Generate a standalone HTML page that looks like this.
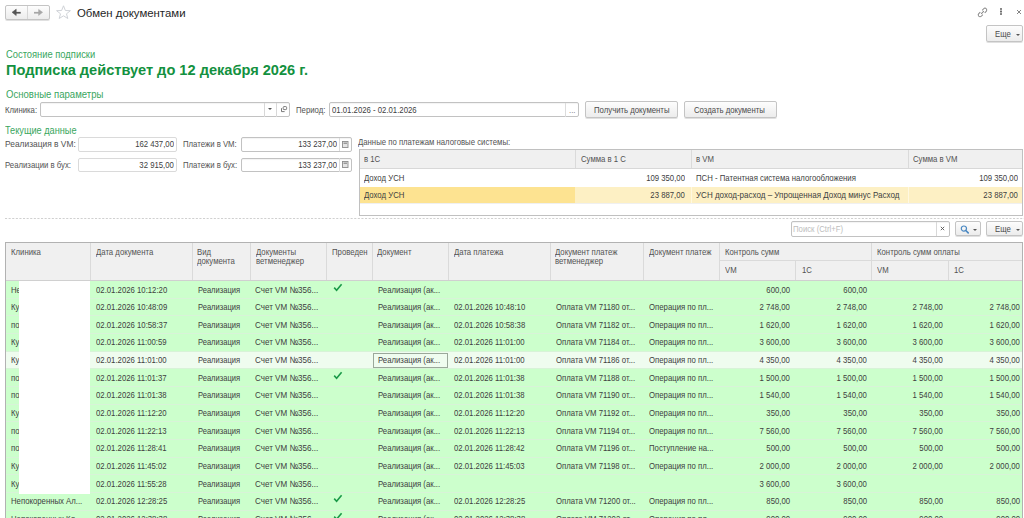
<!DOCTYPE html>
<html><head><meta charset="utf-8"><style>
html,body{margin:0;padding:0;}
body{width:1024px;height:518px;overflow:hidden;position:relative;background:#fff;font-family:"Liberation Sans",sans-serif;color:#525252;}
.t{position:absolute;line-height:1;white-space:nowrap;}
.r{position:absolute;}
.btn{border:1px solid #c4c4c4;border-radius:2px;box-sizing:border-box;background:linear-gradient(#fdfdfd,#ececec);box-shadow:0 1px 0 rgba(0,0,0,0.12);}
.inp{border:1px solid #c2c2c2;border-radius:2px;box-sizing:border-box;background:#fff;box-shadow:inset 0 1px 1px rgba(0,0,0,0.05);}
.ro{border-color:#dadada;box-shadow:none;}
.tri{position:absolute;width:0;height:0;border-left:2px solid transparent;border-right:2px solid transparent;border-top:2px solid #555;}
</style></head><body>
<div class="r btn" style="left:5.00px;top:5.00px;width:45.00px;height:14.50px;"></div>
<div class="r " style="left:27.00px;top:5.50px;width:1.00px;height:13.50px;background:#d6d6d6;"></div>
<svg class="r" style="left:10px;top:8px" width="36" height="10" viewBox="0 0 36 10">
<path d="M5.5 3.9 H10.7 V5.6 H5.5 Z" fill="#555"/><path d="M2.1 4.3 L6.2 1.2 V7.5 Z" fill="#555" stroke="#555" stroke-width="0.6" stroke-linejoin="round"/>
<path d="M24 3.9 H29.2 V5.6 H24 Z" fill="#a6a6a6"/><path d="M32.6 4.3 L28.6 1.4 V7.4 Z" fill="#a6a6a6" stroke="#a6a6a6" stroke-width="0.5" stroke-linejoin="round"/>
</svg>
<svg class="r" style="left:56px;top:5px" width="16" height="15" viewBox="0 0 16 15">
<path d="M7.5 0.8 L9.4 5.5 L14.4 5.7 L10.5 8.8 L11.8 13.5 L7.5 10.8 L3.2 13.5 L4.5 8.8 L0.6 5.7 L5.6 5.5 Z" fill="none" stroke="#c9cdd2" stroke-width="0.9" stroke-linejoin="miter"/>
</svg>
<div class="t " style="top:7.85px;font-size:11.4px;left:77.00px;transform-origin:0 0;color:#1f1f1f;">Обмен документами</div>
<svg class="r" style="left:975.6px;top:5.6px" width="13" height="13" viewBox="0 0 13 13">
<g transform="rotate(-45 6.5 6.5)" fill="none" stroke="#858585" stroke-width="0.95">
<path d="M5.2 4.7 H3 A1.8 1.8 0 0 0 3 8.3 H5.2"/><path d="M7.8 4.7 H10 A1.8 1.8 0 0 1 10 8.3 H7.8"/><path d="M4.6 6.5 H8.4"/>
</g></svg>
<svg class="r" style="left:998px;top:7px" width="6" height="9" viewBox="0 0 6 9">
<path d="M3 1.3 V7.8" stroke="#9a9a9a" stroke-width="0.8"/>
<rect x="2.2" y="1.2" width="1.6" height="1.5" fill="#555"/><rect x="2.2" y="3.8" width="1.6" height="1.5" fill="#555"/><rect x="2.2" y="6.3" width="1.6" height="1.5" fill="#555"/>
</svg>
<svg class="r" style="left:1016px;top:9px" width="6" height="6" viewBox="0 0 6 6">
<path d="M1 1 L5 5 M5 1 L1 5" stroke="#777" stroke-width="0.9"/></svg>
<div class="r btn" style="left:986.40px;top:25.20px;width:36.50px;height:16.50px;"></div>
<div class="t " style="top:29.81px;font-size:9.2px;left:994.80px;transform-origin:0 0;transform:scaleX(0.845);color:#4a4a4a;">Еще</div>
<div class="tri" style="left:1015.6px;top:33.6px"></div>
<div class="t " style="top:49.88px;font-size:10.3px;left:5.60px;transform-origin:0 0;transform:scaleX(0.909);color:#3aa65e;">Состояние подписки</div>
<div class="t " style="top:63.44px;font-size:14.6px;left:6.00px;transform-origin:0 0;color:#139140;font-weight:bold;">Подписка действует до 12 декабря 2026 г.</div>
<div class="t " style="top:90.08px;font-size:10.3px;left:5.60px;transform-origin:0 0;transform:scaleX(0.929);color:#3aa65e;">Основные параметры</div>
<div class="t " style="top:105.91px;font-size:9.2px;left:5.00px;transform-origin:0 0;transform:scaleX(0.845);">Клиника:</div>
<div class="r inp" style="left:40.40px;top:102.20px;width:249.60px;height:15.00px;"></div>
<div class="r " style="left:263.80px;top:102.60px;width:1.00px;height:14.20px;background:#d8d8d8;"></div>
<div class="r " style="left:275.90px;top:102.60px;width:1.00px;height:14.20px;background:#d8d8d8;"></div>
<div class="tri" style="left:268.3px;top:108.2px"></div>
<svg class="r" style="left:280px;top:105px" width="8" height="8" viewBox="0 0 8 8">
<rect x="3.2" y="1.6" width="3.4" height="3" rx="0.8" fill="none" stroke="#6a6a6a" stroke-width="0.9"/>
<path d="M1.5 3.2 V6.6 H4.6" fill="none" stroke="#6a6a6a" stroke-width="0.9"/></svg>
<div class="t " style="top:105.91px;font-size:9.2px;left:296.40px;transform-origin:0 0;transform:scaleX(0.845);">Период:</div>
<div class="r inp" style="left:329.30px;top:102.10px;width:250.00px;height:15.00px;"></div>
<div class="r " style="left:565.40px;top:102.50px;width:1.00px;height:14.20px;background:#dcdcdc;"></div>
<div class="t " style="top:105.91px;font-size:9.2px;left:332.00px;transform-origin:0 0;transform:scaleX(0.845);color:#404040;">01.01.2026 - 02.01.2026</div>
<div class="t " style="top:105.71px;font-size:9.2px;left:568.50px;transform-origin:0 0;transform:scaleX(0.845);color:#888;">...</div>
<div class="r btn" style="left:585.20px;top:101.30px;width:92.70px;height:16.30px;"></div>
<div class="t " style="top:106.01px;font-size:9.2px;left:593.70px;transform-origin:0 0;transform:scaleX(0.845);color:#4a4a4a;">Получить документы</div>
<div class="r btn" style="left:684.20px;top:101.30px;width:92.60px;height:16.30px;"></div>
<div class="t " style="top:106.01px;font-size:9.2px;left:694.30px;transform-origin:0 0;transform:scaleX(0.845);color:#4a4a4a;">Создать документы</div>
<div class="t " style="top:125.94px;font-size:10px;left:4.90px;transform-origin:0 0;transform:scaleX(0.918);color:#3aa65e;">Текущие данные</div>
<div class="t " style="top:140.41px;font-size:9.2px;left:4.90px;transform-origin:0 0;transform:scaleX(0.913);">Реализация в VM:</div>
<div class="r inp ro" style="left:78.40px;top:137.30px;width:98.30px;height:14.40px;"></div>
<div class="t " style="top:140.41px;font-size:9.2px;right:850.00px;transform-origin:100% 0;transform:scaleX(0.845);color:#404040;">162 437,00</div>
<div class="t " style="top:161.01px;font-size:9.2px;left:4.90px;transform-origin:0 0;transform:scaleX(0.845);">Реализации в бух:</div>
<div class="r inp ro" style="left:78.40px;top:157.50px;width:98.30px;height:14.90px;"></div>
<div class="t " style="top:161.01px;font-size:9.2px;right:850.00px;transform-origin:100% 0;transform:scaleX(0.845);color:#404040;">32 915,00</div>
<div class="t " style="top:140.41px;font-size:9.2px;left:182.80px;transform-origin:0 0;transform:scaleX(0.845);">Платежи в VM:</div>
<div class="t " style="top:161.01px;font-size:9.2px;left:182.80px;transform-origin:0 0;transform:scaleX(0.845);">Платежи в бух:</div>
<div class="r inp" style="left:241.30px;top:137.40px;width:110.70px;height:14.20px;"></div>
<div class="r " style="left:338.80px;top:137.80px;width:1.00px;height:13.40px;background:#dcdcdc;"></div>
<div class="t " style="top:140.41px;font-size:9.2px;right:687.30px;transform-origin:100% 0;transform:scaleX(0.845);color:#404040;">133 237,00</div>
<svg class="r" style="left:342px;top:140.80px" width="7" height="7" viewBox="0 0 7 7"><rect x="0.5" y="0.5" width="5.5" height="6" fill="#e4e4e4" stroke="#8c8c8c" stroke-width="0.9"/><rect x="1.5" y="1.5" width="3.5" height="1.5" fill="#9a9a9a"/></svg>
<div class="r inp" style="left:241.30px;top:157.70px;width:110.70px;height:14.80px;"></div>
<div class="r " style="left:338.80px;top:158.10px;width:1.00px;height:14.00px;background:#dcdcdc;"></div>
<div class="t " style="top:161.01px;font-size:9.2px;right:687.30px;transform-origin:100% 0;transform:scaleX(0.845);color:#404040;">133 237,00</div>
<svg class="r" style="left:342px;top:161.10px" width="7" height="7" viewBox="0 0 7 7"><rect x="0.5" y="0.5" width="5.5" height="6" fill="#e4e4e4" stroke="#8c8c8c" stroke-width="0.9"/><rect x="1.5" y="1.5" width="3.5" height="1.5" fill="#9a9a9a"/></svg>
<div class="t " style="top:138.21px;font-size:9.2px;left:358.10px;transform-origin:0 0;transform:scaleX(0.845);">Данные по платежам налоговые системы:</div>
<div class="r " style="left:358.50px;top:149.30px;width:664.50px;height:66.70px;border:1px solid #c0c0c0;background:#fff;box-sizing:border-box;"></div>
<div class="r " style="left:359.50px;top:150.30px;width:662.50px;height:18.40px;background:#f0f0f0;border-bottom:1px solid #d8d8d8;box-sizing:border-box;"></div>
<div class="r " style="left:575.30px;top:150.30px;width:1.00px;height:17.80px;background:#dadada;"></div>
<div class="r " style="left:690.50px;top:150.30px;width:1.00px;height:17.80px;background:#dadada;"></div>
<div class="r " style="left:907.50px;top:150.30px;width:1.00px;height:17.80px;background:#dadada;"></div>
<div class="t " style="top:154.71px;font-size:9.2px;left:363.90px;transform-origin:0 0;transform:scaleX(0.845);">в 1С</div>
<div class="t " style="top:154.71px;font-size:9.2px;left:580.60px;transform-origin:0 0;transform:scaleX(0.845);">Сумма в 1 С</div>
<div class="t " style="top:154.71px;font-size:9.2px;left:695.90px;transform-origin:0 0;transform:scaleX(0.845);">в VM</div>
<div class="t " style="top:154.71px;font-size:9.2px;left:912.50px;transform-origin:0 0;transform:scaleX(0.845);">Сумма в VM</div>
<div class="t " style="top:173.81px;font-size:9.2px;left:363.90px;transform-origin:0 0;transform:scaleX(0.845);color:#404040;">Доход УСН</div>
<div class="t " style="top:173.81px;font-size:9.2px;right:339.00px;transform-origin:100% 0;transform:scaleX(0.845);color:#404040;">109 350,00</div>
<div class="t " style="top:173.81px;font-size:9.2px;left:695.90px;transform-origin:0 0;transform:scaleX(0.845);color:#404040;">ПСН - Патентная система налогообложения</div>
<div class="t " style="top:173.81px;font-size:9.2px;right:6.40px;transform-origin:100% 0;transform:scaleX(0.845);color:#404040;">109 350,00</div>
<div class="r " style="left:359.50px;top:186.90px;width:215.80px;height:15.90px;background:#fde391;"></div>
<div class="r " style="left:575.30px;top:186.90px;width:446.70px;height:15.90px;background:#fdf0c4;"></div>
<div class="r " style="left:690.50px;top:186.90px;width:1.00px;height:15.90px;background:#fff8e0;"></div>
<div class="r " style="left:907.50px;top:186.90px;width:1.00px;height:15.90px;background:#fff8e0;"></div>
<div class="r " style="left:359.50px;top:202.80px;width:662.50px;height:1.00px;background:#f0f0f0;"></div>
<div class="t " style="top:191.21px;font-size:9.2px;left:363.90px;transform-origin:0 0;transform:scaleX(0.845);color:#404040;">Доход УСН</div>
<div class="t " style="top:191.21px;font-size:9.2px;right:339.00px;transform-origin:100% 0;transform:scaleX(0.845);color:#404040;">23 887,00</div>
<div class="t " style="top:191.21px;font-size:9.2px;left:695.90px;transform-origin:0 0;transform:scaleX(0.874);color:#404040;">УСН доход-расход – Упрощенная Доход минус Расход</div>
<div class="t " style="top:191.21px;font-size:9.2px;right:6.40px;transform-origin:100% 0;transform:scaleX(0.845);color:#404040;">23 887,00</div>
<svg class="r" style="left:4.7px;top:218px" width="1020" height="1" viewBox="0 0 1020 1"><path d="M0 0.5 H1020" stroke="#d0d0d0" stroke-width="1" stroke-dasharray="2.1 1.5"/></svg>
<div class="r inp" style="left:791.20px;top:221.30px;width:159.10px;height:15.30px;"></div>
<div class="r " style="left:935.90px;top:222.00px;width:1.00px;height:13.90px;background:#d8d8d8;"></div>
<div class="t " style="top:225.41px;font-size:9.2px;left:793.20px;transform-origin:0 0;transform:scaleX(0.845);color:#bdbdbd;">Поиск (Ctrl+F)</div>
<svg class="r" style="left:940px;top:226px" width="5" height="5" viewBox="0 0 5 5">
<path d="M0.8 0.8 L4.2 4.2 M4.2 0.8 L0.8 4.2" stroke="#555" stroke-width="0.9"/></svg>
<div class="r btn" style="left:955.20px;top:221.30px;width:25.60px;height:15.00px;"></div>
<svg class="r" style="left:959.5px;top:224.8px" width="10" height="9" viewBox="0 0 10 9">
<circle cx="3.9" cy="3.6" r="2.6" fill="none" stroke="#4a88c2" stroke-width="1.2"/>
<path d="M5.8 5.5 L8.2 7.9" stroke="#4a88c2" stroke-width="1.6" stroke-linecap="round"/></svg>
<div class="tri" style="left:973px;top:228.8px"></div>
<div class="r btn" style="left:986.20px;top:221.30px;width:36.60px;height:15.00px;"></div>
<div class="t " style="top:225.41px;font-size:9.2px;left:995.00px;transform-origin:0 0;transform:scaleX(0.845);color:#4a4a4a;">Еще</div>
<div class="tri" style="left:1015.6px;top:228.8px"></div>
<div class="r " style="left:4.90px;top:242.00px;width:1018.30px;height:288.00px;border:1px solid #b2b2b2;border-bottom:none;box-sizing:border-box;background:#fff;"></div>
<div class="r " style="left:5.90px;top:243.00px;width:1016.30px;height:37.00px;background:#f0f0f0;"></div>
<div class="r " style="left:5.90px;top:279.50px;width:1016.30px;height:1.00px;background:#d0d0d0;"></div>
<div class="r " style="left:89.80px;top:243.00px;width:1.00px;height:37.00px;background:#dadada;"></div>
<div class="r " style="left:192.00px;top:243.00px;width:1.00px;height:37.00px;background:#dadada;"></div>
<div class="r " style="left:249.90px;top:243.00px;width:1.00px;height:37.00px;background:#dadada;"></div>
<div class="r " style="left:326.00px;top:243.00px;width:1.00px;height:37.00px;background:#dadada;"></div>
<div class="r " style="left:371.80px;top:243.00px;width:1.00px;height:37.00px;background:#dadada;"></div>
<div class="r " style="left:448.10px;top:243.00px;width:1.00px;height:37.00px;background:#dadada;"></div>
<div class="r " style="left:550.00px;top:243.00px;width:1.00px;height:37.00px;background:#dadada;"></div>
<div class="r " style="left:643.10px;top:243.00px;width:1.00px;height:37.00px;background:#dadada;"></div>
<div class="r " style="left:719.00px;top:243.00px;width:1.00px;height:37.00px;background:#dadada;"></div>
<div class="r " style="left:871.10px;top:243.00px;width:1.00px;height:37.00px;background:#dadada;"></div>
<div class="r " style="left:795.10px;top:261.00px;width:1.00px;height:19.00px;background:#dadada;"></div>
<div class="r " style="left:948.00px;top:261.00px;width:1.00px;height:19.00px;background:#dadada;"></div>
<div class="r " style="left:719.50px;top:260.30px;width:302.70px;height:1.00px;background:#dadada;"></div>
<div class="t " style="top:247.81px;font-size:9.2px;left:10.50px;transform-origin:0 0;transform:scaleX(0.845);">Клиника</div>
<div class="t " style="top:247.81px;font-size:9.2px;left:95.60px;transform-origin:0 0;transform:scaleX(0.845);">Дата документа</div>
<div class="t " style="top:247.81px;font-size:9.2px;left:197.40px;transform-origin:0 0;transform:scaleX(0.845);">Вид</div>
<div class="t " style="top:257.11px;font-size:9.2px;left:197.40px;transform-origin:0 0;transform:scaleX(0.845);">документа</div>
<div class="t " style="top:247.81px;font-size:9.2px;left:255.50px;transform-origin:0 0;transform:scaleX(0.845);">Документы</div>
<div class="t " style="top:257.11px;font-size:9.2px;left:255.50px;transform-origin:0 0;transform:scaleX(0.845);">ветменеджер</div>
<div class="t " style="top:247.81px;font-size:9.2px;left:331.70px;transform-origin:0 0;transform:scaleX(0.845);">Проведен</div>
<div class="t " style="top:247.81px;font-size:9.2px;left:377.30px;transform-origin:0 0;transform:scaleX(0.845);">Документ</div>
<div class="t " style="top:247.81px;font-size:9.2px;left:454.00px;transform-origin:0 0;transform:scaleX(0.845);">Дата платежа</div>
<div class="t " style="top:247.81px;font-size:9.2px;left:555.10px;transform-origin:0 0;transform:scaleX(0.845);">Документ платеж</div>
<div class="t " style="top:257.11px;font-size:9.2px;left:555.10px;transform-origin:0 0;transform:scaleX(0.845);">ветменеджер</div>
<div class="t " style="top:247.81px;font-size:9.2px;left:648.60px;transform-origin:0 0;transform:scaleX(0.845);">Документ платеж</div>
<div class="t " style="top:247.81px;font-size:9.2px;left:725.00px;transform-origin:0 0;transform:scaleX(0.845);">Контроль сумм</div>
<div class="t " style="top:247.81px;font-size:9.2px;left:877.30px;transform-origin:0 0;transform:scaleX(0.845);">Контроль сумм оплаты</div>
<div class="t " style="top:266.31px;font-size:9.2px;left:725.00px;transform-origin:0 0;transform:scaleX(0.845);">VM</div>
<div class="t " style="top:266.31px;font-size:9.2px;left:801.70px;transform-origin:0 0;transform:scaleX(0.845);">1С</div>
<div class="t " style="top:266.31px;font-size:9.2px;left:877.30px;transform-origin:0 0;transform:scaleX(0.845);">VM</div>
<div class="t " style="top:266.31px;font-size:9.2px;left:954.20px;transform-origin:0 0;transform:scaleX(0.845);">1С</div>
<div class="r " style="left:5.90px;top:280.50px;width:1016.30px;height:17.66px;background:#ccffcc;"></div>
<div class="t " style="top:285.51px;font-size:9.2px;left:10.50px;transform-origin:0 0;transform:scaleX(0.845);color:#404040;">Не</div>
<div class="t " style="top:285.51px;font-size:9.2px;left:95.60px;transform-origin:0 0;transform:scaleX(0.845);color:#404040;">02.01.2026 10:12:20</div>
<div class="t " style="top:285.51px;font-size:9.2px;left:197.80px;transform-origin:0 0;transform:scaleX(0.823);color:#404040;">Реализация</div>
<div class="t " style="top:285.51px;font-size:9.2px;left:255.20px;transform-origin:0 0;transform:scaleX(0.877);color:#404040;">Счет VM №356...</div>
<svg class="r" style="left:333px;top:282.50px" width="10" height="9" viewBox="0 0 10 9"><path d="M1.2 4.6 L3.6 7.2 L8.6 1.2" fill="none" stroke="#1a9a48" stroke-width="1.6"/></svg>
<div class="t " style="top:285.51px;font-size:9.2px;left:378.00px;transform-origin:0 0;transform:scaleX(0.845);color:#404040;">Реализация (ак...</div>
<div class="t " style="top:285.51px;font-size:9.2px;left:454.00px;transform-origin:0 0;transform:scaleX(0.845);color:#404040;"></div>
<div class="t " style="top:285.51px;font-size:9.2px;left:555.70px;transform-origin:0 0;transform:scaleX(0.845);color:#404040;"></div>
<div class="t " style="top:285.51px;font-size:9.2px;left:648.60px;transform-origin:0 0;transform:scaleX(0.845);color:#404040;"></div>
<div class="t " style="top:285.51px;font-size:9.2px;right:233.80px;transform-origin:100% 0;transform:scaleX(0.845);color:#404040;">600,00</div>
<div class="t " style="top:285.51px;font-size:9.2px;right:157.20px;transform-origin:100% 0;transform:scaleX(0.845);color:#404040;">600,00</div>
<div class="r " style="left:5.90px;top:298.16px;width:1016.30px;height:17.66px;background:#ccffcc;"></div>
<div class="t " style="top:303.17px;font-size:9.2px;left:10.50px;transform-origin:0 0;transform:scaleX(0.845);color:#404040;">Ку</div>
<div class="t " style="top:303.17px;font-size:9.2px;left:95.60px;transform-origin:0 0;transform:scaleX(0.845);color:#404040;">02.01.2026 10:48:09</div>
<div class="t " style="top:303.17px;font-size:9.2px;left:197.80px;transform-origin:0 0;transform:scaleX(0.823);color:#404040;">Реализация</div>
<div class="t " style="top:303.17px;font-size:9.2px;left:255.20px;transform-origin:0 0;transform:scaleX(0.877);color:#404040;">Счет VM №356...</div>
<div class="t " style="top:303.17px;font-size:9.2px;left:378.00px;transform-origin:0 0;transform:scaleX(0.845);color:#404040;">Реализация (ак...</div>
<div class="t " style="top:303.17px;font-size:9.2px;left:454.00px;transform-origin:0 0;transform:scaleX(0.845);color:#404040;">02.01.2026 10:48:10</div>
<div class="t " style="top:303.17px;font-size:9.2px;left:555.70px;transform-origin:0 0;transform:scaleX(0.845);color:#404040;">Оплата VM 71180 от...</div>
<div class="t " style="top:303.17px;font-size:9.2px;left:648.60px;transform-origin:0 0;transform:scaleX(0.845);color:#404040;">Операция по пл...</div>
<div class="t " style="top:303.17px;font-size:9.2px;right:233.80px;transform-origin:100% 0;transform:scaleX(0.845);color:#404040;">2 748,00</div>
<div class="t " style="top:303.17px;font-size:9.2px;right:157.20px;transform-origin:100% 0;transform:scaleX(0.845);color:#404040;">2 748,00</div>
<div class="t " style="top:303.17px;font-size:9.2px;right:81.00px;transform-origin:100% 0;transform:scaleX(0.845);color:#404040;">2 748,00</div>
<div class="t " style="top:303.17px;font-size:9.2px;right:4.40px;transform-origin:100% 0;transform:scaleX(0.845);color:#404040;">2 748,00</div>
<div class="r " style="left:5.90px;top:315.82px;width:1016.30px;height:17.66px;background:#ccffcc;"></div>
<div class="t " style="top:320.83px;font-size:9.2px;left:10.50px;transform-origin:0 0;transform:scaleX(0.845);color:#404040;">по</div>
<div class="t " style="top:320.83px;font-size:9.2px;left:95.60px;transform-origin:0 0;transform:scaleX(0.845);color:#404040;">02.01.2026 10:58:37</div>
<div class="t " style="top:320.83px;font-size:9.2px;left:197.80px;transform-origin:0 0;transform:scaleX(0.823);color:#404040;">Реализация</div>
<div class="t " style="top:320.83px;font-size:9.2px;left:255.20px;transform-origin:0 0;transform:scaleX(0.877);color:#404040;">Счет VM №356...</div>
<div class="t " style="top:320.83px;font-size:9.2px;left:378.00px;transform-origin:0 0;transform:scaleX(0.845);color:#404040;">Реализация (ак...</div>
<div class="t " style="top:320.83px;font-size:9.2px;left:454.00px;transform-origin:0 0;transform:scaleX(0.845);color:#404040;">02.01.2026 10:58:38</div>
<div class="t " style="top:320.83px;font-size:9.2px;left:555.70px;transform-origin:0 0;transform:scaleX(0.845);color:#404040;">Оплата VM 71182 от...</div>
<div class="t " style="top:320.83px;font-size:9.2px;left:648.60px;transform-origin:0 0;transform:scaleX(0.845);color:#404040;">Операция по пл...</div>
<div class="t " style="top:320.83px;font-size:9.2px;right:233.80px;transform-origin:100% 0;transform:scaleX(0.845);color:#404040;">1 620,00</div>
<div class="t " style="top:320.83px;font-size:9.2px;right:157.20px;transform-origin:100% 0;transform:scaleX(0.845);color:#404040;">1 620,00</div>
<div class="t " style="top:320.83px;font-size:9.2px;right:81.00px;transform-origin:100% 0;transform:scaleX(0.845);color:#404040;">1 620,00</div>
<div class="t " style="top:320.83px;font-size:9.2px;right:4.40px;transform-origin:100% 0;transform:scaleX(0.845);color:#404040;">1 620,00</div>
<div class="r " style="left:5.90px;top:333.48px;width:1016.30px;height:17.66px;background:#ccffcc;"></div>
<div class="t " style="top:338.49px;font-size:9.2px;left:10.50px;transform-origin:0 0;transform:scaleX(0.845);color:#404040;">Ку</div>
<div class="t " style="top:338.49px;font-size:9.2px;left:95.60px;transform-origin:0 0;transform:scaleX(0.845);color:#404040;">02.01.2026 11:00:59</div>
<div class="t " style="top:338.49px;font-size:9.2px;left:197.80px;transform-origin:0 0;transform:scaleX(0.823);color:#404040;">Реализация</div>
<div class="t " style="top:338.49px;font-size:9.2px;left:255.20px;transform-origin:0 0;transform:scaleX(0.877);color:#404040;">Счет VM №356...</div>
<div class="t " style="top:338.49px;font-size:9.2px;left:378.00px;transform-origin:0 0;transform:scaleX(0.845);color:#404040;">Реализация (ак...</div>
<div class="t " style="top:338.49px;font-size:9.2px;left:454.00px;transform-origin:0 0;transform:scaleX(0.845);color:#404040;">02.01.2026 11:01:00</div>
<div class="t " style="top:338.49px;font-size:9.2px;left:555.70px;transform-origin:0 0;transform:scaleX(0.845);color:#404040;">Оплата VM 71184 от...</div>
<div class="t " style="top:338.49px;font-size:9.2px;left:648.60px;transform-origin:0 0;transform:scaleX(0.845);color:#404040;">Операция по пл...</div>
<div class="t " style="top:338.49px;font-size:9.2px;right:233.80px;transform-origin:100% 0;transform:scaleX(0.845);color:#404040;">3 600,00</div>
<div class="t " style="top:338.49px;font-size:9.2px;right:157.20px;transform-origin:100% 0;transform:scaleX(0.845);color:#404040;">3 600,00</div>
<div class="t " style="top:338.49px;font-size:9.2px;right:81.00px;transform-origin:100% 0;transform:scaleX(0.845);color:#404040;">3 600,00</div>
<div class="t " style="top:338.49px;font-size:9.2px;right:4.40px;transform-origin:100% 0;transform:scaleX(0.845);color:#404040;">3 600,00</div>
<div class="r " style="left:5.90px;top:351.14px;width:1016.30px;height:17.66px;background:#effcef;"></div>
<div class="t " style="top:356.15px;font-size:9.2px;left:10.50px;transform-origin:0 0;transform:scaleX(0.845);color:#404040;">Ку</div>
<div class="t " style="top:356.15px;font-size:9.2px;left:95.60px;transform-origin:0 0;transform:scaleX(0.845);color:#404040;">02.01.2026 11:01:00</div>
<div class="t " style="top:356.15px;font-size:9.2px;left:197.80px;transform-origin:0 0;transform:scaleX(0.823);color:#404040;">Реализация</div>
<div class="t " style="top:356.15px;font-size:9.2px;left:255.20px;transform-origin:0 0;transform:scaleX(0.877);color:#404040;">Счет VM №356...</div>
<div class="t " style="top:356.15px;font-size:9.2px;left:378.00px;transform-origin:0 0;transform:scaleX(0.845);color:#404040;">Реализация (ак...</div>
<div class="t " style="top:356.15px;font-size:9.2px;left:454.00px;transform-origin:0 0;transform:scaleX(0.845);color:#404040;">02.01.2026 11:01:00</div>
<div class="t " style="top:356.15px;font-size:9.2px;left:555.70px;transform-origin:0 0;transform:scaleX(0.845);color:#404040;">Оплата VM 71186 от...</div>
<div class="t " style="top:356.15px;font-size:9.2px;left:648.60px;transform-origin:0 0;transform:scaleX(0.845);color:#404040;">Операция по пл...</div>
<div class="t " style="top:356.15px;font-size:9.2px;right:233.80px;transform-origin:100% 0;transform:scaleX(0.845);color:#404040;">4 350,00</div>
<div class="t " style="top:356.15px;font-size:9.2px;right:157.20px;transform-origin:100% 0;transform:scaleX(0.845);color:#404040;">4 350,00</div>
<div class="t " style="top:356.15px;font-size:9.2px;right:81.00px;transform-origin:100% 0;transform:scaleX(0.845);color:#404040;">4 350,00</div>
<div class="t " style="top:356.15px;font-size:9.2px;right:4.40px;transform-origin:100% 0;transform:scaleX(0.845);color:#404040;">4 350,00</div>
<div class="r " style="left:373.20px;top:352.64px;width:74.70px;height:15.16px;border:1px solid #9aa89a;box-sizing:border-box;"></div>
<div class="r " style="left:5.90px;top:368.80px;width:1016.30px;height:17.66px;background:#ccffcc;"></div>
<div class="t " style="top:373.81px;font-size:9.2px;left:10.50px;transform-origin:0 0;transform:scaleX(0.845);color:#404040;">по</div>
<div class="t " style="top:373.81px;font-size:9.2px;left:95.60px;transform-origin:0 0;transform:scaleX(0.845);color:#404040;">02.01.2026 11:01:37</div>
<div class="t " style="top:373.81px;font-size:9.2px;left:197.80px;transform-origin:0 0;transform:scaleX(0.823);color:#404040;">Реализация</div>
<div class="t " style="top:373.81px;font-size:9.2px;left:255.20px;transform-origin:0 0;transform:scaleX(0.877);color:#404040;">Счет VM №356...</div>
<svg class="r" style="left:333px;top:370.80px" width="10" height="9" viewBox="0 0 10 9"><path d="M1.2 4.6 L3.6 7.2 L8.6 1.2" fill="none" stroke="#1a9a48" stroke-width="1.6"/></svg>
<div class="t " style="top:373.81px;font-size:9.2px;left:378.00px;transform-origin:0 0;transform:scaleX(0.845);color:#404040;">Реализация (ак...</div>
<div class="t " style="top:373.81px;font-size:9.2px;left:454.00px;transform-origin:0 0;transform:scaleX(0.845);color:#404040;">02.01.2026 11:01:38</div>
<div class="t " style="top:373.81px;font-size:9.2px;left:555.70px;transform-origin:0 0;transform:scaleX(0.845);color:#404040;">Оплата VM 71188 от...</div>
<div class="t " style="top:373.81px;font-size:9.2px;left:648.60px;transform-origin:0 0;transform:scaleX(0.845);color:#404040;">Операция по пл...</div>
<div class="t " style="top:373.81px;font-size:9.2px;right:233.80px;transform-origin:100% 0;transform:scaleX(0.845);color:#404040;">1 500,00</div>
<div class="t " style="top:373.81px;font-size:9.2px;right:157.20px;transform-origin:100% 0;transform:scaleX(0.845);color:#404040;">1 500,00</div>
<div class="t " style="top:373.81px;font-size:9.2px;right:81.00px;transform-origin:100% 0;transform:scaleX(0.845);color:#404040;">1 500,00</div>
<div class="t " style="top:373.81px;font-size:9.2px;right:4.40px;transform-origin:100% 0;transform:scaleX(0.845);color:#404040;">1 500,00</div>
<div class="r " style="left:5.90px;top:386.46px;width:1016.30px;height:17.66px;background:#ccffcc;"></div>
<div class="t " style="top:391.47px;font-size:9.2px;left:10.50px;transform-origin:0 0;transform:scaleX(0.845);color:#404040;">по</div>
<div class="t " style="top:391.47px;font-size:9.2px;left:95.60px;transform-origin:0 0;transform:scaleX(0.845);color:#404040;">02.01.2026 11:01:38</div>
<div class="t " style="top:391.47px;font-size:9.2px;left:197.80px;transform-origin:0 0;transform:scaleX(0.823);color:#404040;">Реализация</div>
<div class="t " style="top:391.47px;font-size:9.2px;left:255.20px;transform-origin:0 0;transform:scaleX(0.877);color:#404040;">Счет VM №356...</div>
<div class="t " style="top:391.47px;font-size:9.2px;left:378.00px;transform-origin:0 0;transform:scaleX(0.845);color:#404040;">Реализация (ак...</div>
<div class="t " style="top:391.47px;font-size:9.2px;left:454.00px;transform-origin:0 0;transform:scaleX(0.845);color:#404040;">02.01.2026 11:01:38</div>
<div class="t " style="top:391.47px;font-size:9.2px;left:555.70px;transform-origin:0 0;transform:scaleX(0.845);color:#404040;">Оплата VM 71190 от...</div>
<div class="t " style="top:391.47px;font-size:9.2px;left:648.60px;transform-origin:0 0;transform:scaleX(0.845);color:#404040;">Операция по пл...</div>
<div class="t " style="top:391.47px;font-size:9.2px;right:233.80px;transform-origin:100% 0;transform:scaleX(0.845);color:#404040;">1 540,00</div>
<div class="t " style="top:391.47px;font-size:9.2px;right:157.20px;transform-origin:100% 0;transform:scaleX(0.845);color:#404040;">1 540,00</div>
<div class="t " style="top:391.47px;font-size:9.2px;right:81.00px;transform-origin:100% 0;transform:scaleX(0.845);color:#404040;">1 540,00</div>
<div class="t " style="top:391.47px;font-size:9.2px;right:4.40px;transform-origin:100% 0;transform:scaleX(0.845);color:#404040;">1 540,00</div>
<div class="r " style="left:5.90px;top:404.12px;width:1016.30px;height:17.66px;background:#ccffcc;"></div>
<div class="t " style="top:409.13px;font-size:9.2px;left:10.50px;transform-origin:0 0;transform:scaleX(0.845);color:#404040;">Ку</div>
<div class="t " style="top:409.13px;font-size:9.2px;left:95.60px;transform-origin:0 0;transform:scaleX(0.845);color:#404040;">02.01.2026 11:12:20</div>
<div class="t " style="top:409.13px;font-size:9.2px;left:197.80px;transform-origin:0 0;transform:scaleX(0.823);color:#404040;">Реализация</div>
<div class="t " style="top:409.13px;font-size:9.2px;left:255.20px;transform-origin:0 0;transform:scaleX(0.877);color:#404040;">Счет VM №356...</div>
<div class="t " style="top:409.13px;font-size:9.2px;left:378.00px;transform-origin:0 0;transform:scaleX(0.845);color:#404040;">Реализация (ак...</div>
<div class="t " style="top:409.13px;font-size:9.2px;left:454.00px;transform-origin:0 0;transform:scaleX(0.845);color:#404040;">02.01.2026 11:12:20</div>
<div class="t " style="top:409.13px;font-size:9.2px;left:555.70px;transform-origin:0 0;transform:scaleX(0.845);color:#404040;">Оплата VM 71192 от...</div>
<div class="t " style="top:409.13px;font-size:9.2px;left:648.60px;transform-origin:0 0;transform:scaleX(0.845);color:#404040;">Операция по пл...</div>
<div class="t " style="top:409.13px;font-size:9.2px;right:233.80px;transform-origin:100% 0;transform:scaleX(0.845);color:#404040;">350,00</div>
<div class="t " style="top:409.13px;font-size:9.2px;right:157.20px;transform-origin:100% 0;transform:scaleX(0.845);color:#404040;">350,00</div>
<div class="t " style="top:409.13px;font-size:9.2px;right:81.00px;transform-origin:100% 0;transform:scaleX(0.845);color:#404040;">350,00</div>
<div class="t " style="top:409.13px;font-size:9.2px;right:4.40px;transform-origin:100% 0;transform:scaleX(0.845);color:#404040;">350,00</div>
<div class="r " style="left:5.90px;top:421.78px;width:1016.30px;height:17.66px;background:#ccffcc;"></div>
<div class="t " style="top:426.79px;font-size:9.2px;left:10.50px;transform-origin:0 0;transform:scaleX(0.845);color:#404040;">по</div>
<div class="t " style="top:426.79px;font-size:9.2px;left:95.60px;transform-origin:0 0;transform:scaleX(0.845);color:#404040;">02.01.2026 11:22:13</div>
<div class="t " style="top:426.79px;font-size:9.2px;left:197.80px;transform-origin:0 0;transform:scaleX(0.823);color:#404040;">Реализация</div>
<div class="t " style="top:426.79px;font-size:9.2px;left:255.20px;transform-origin:0 0;transform:scaleX(0.877);color:#404040;">Счет VM №356...</div>
<div class="t " style="top:426.79px;font-size:9.2px;left:378.00px;transform-origin:0 0;transform:scaleX(0.845);color:#404040;">Реализация (ак...</div>
<div class="t " style="top:426.79px;font-size:9.2px;left:454.00px;transform-origin:0 0;transform:scaleX(0.845);color:#404040;">02.01.2026 11:22:13</div>
<div class="t " style="top:426.79px;font-size:9.2px;left:555.70px;transform-origin:0 0;transform:scaleX(0.845);color:#404040;">Оплата VM 71194 от...</div>
<div class="t " style="top:426.79px;font-size:9.2px;left:648.60px;transform-origin:0 0;transform:scaleX(0.845);color:#404040;">Операция по пл...</div>
<div class="t " style="top:426.79px;font-size:9.2px;right:233.80px;transform-origin:100% 0;transform:scaleX(0.845);color:#404040;">7 560,00</div>
<div class="t " style="top:426.79px;font-size:9.2px;right:157.20px;transform-origin:100% 0;transform:scaleX(0.845);color:#404040;">7 560,00</div>
<div class="t " style="top:426.79px;font-size:9.2px;right:81.00px;transform-origin:100% 0;transform:scaleX(0.845);color:#404040;">7 560,00</div>
<div class="t " style="top:426.79px;font-size:9.2px;right:4.40px;transform-origin:100% 0;transform:scaleX(0.845);color:#404040;">7 560,00</div>
<div class="r " style="left:5.90px;top:439.44px;width:1016.30px;height:17.66px;background:#ccffcc;"></div>
<div class="t " style="top:444.45px;font-size:9.2px;left:10.50px;transform-origin:0 0;transform:scaleX(0.845);color:#404040;">по</div>
<div class="t " style="top:444.45px;font-size:9.2px;left:95.60px;transform-origin:0 0;transform:scaleX(0.845);color:#404040;">02.01.2026 11:28:41</div>
<div class="t " style="top:444.45px;font-size:9.2px;left:197.80px;transform-origin:0 0;transform:scaleX(0.823);color:#404040;">Реализация</div>
<div class="t " style="top:444.45px;font-size:9.2px;left:255.20px;transform-origin:0 0;transform:scaleX(0.877);color:#404040;">Счет VM №356...</div>
<div class="t " style="top:444.45px;font-size:9.2px;left:378.00px;transform-origin:0 0;transform:scaleX(0.845);color:#404040;">Реализация (ак...</div>
<div class="t " style="top:444.45px;font-size:9.2px;left:454.00px;transform-origin:0 0;transform:scaleX(0.845);color:#404040;">02.01.2026 11:28:42</div>
<div class="t " style="top:444.45px;font-size:9.2px;left:555.70px;transform-origin:0 0;transform:scaleX(0.845);color:#404040;">Оплата VM 71196 от...</div>
<div class="t " style="top:444.45px;font-size:9.2px;left:648.60px;transform-origin:0 0;transform:scaleX(0.845);color:#404040;">Поступление на...</div>
<div class="t " style="top:444.45px;font-size:9.2px;right:233.80px;transform-origin:100% 0;transform:scaleX(0.845);color:#404040;">500,00</div>
<div class="t " style="top:444.45px;font-size:9.2px;right:157.20px;transform-origin:100% 0;transform:scaleX(0.845);color:#404040;">500,00</div>
<div class="t " style="top:444.45px;font-size:9.2px;right:81.00px;transform-origin:100% 0;transform:scaleX(0.845);color:#404040;">500,00</div>
<div class="t " style="top:444.45px;font-size:9.2px;right:4.40px;transform-origin:100% 0;transform:scaleX(0.845);color:#404040;">500,00</div>
<div class="r " style="left:5.90px;top:457.10px;width:1016.30px;height:17.66px;background:#ccffcc;"></div>
<div class="t " style="top:462.11px;font-size:9.2px;left:10.50px;transform-origin:0 0;transform:scaleX(0.845);color:#404040;">Ку</div>
<div class="t " style="top:462.11px;font-size:9.2px;left:95.60px;transform-origin:0 0;transform:scaleX(0.845);color:#404040;">02.01.2026 11:45:02</div>
<div class="t " style="top:462.11px;font-size:9.2px;left:197.80px;transform-origin:0 0;transform:scaleX(0.823);color:#404040;">Реализация</div>
<div class="t " style="top:462.11px;font-size:9.2px;left:255.20px;transform-origin:0 0;transform:scaleX(0.877);color:#404040;">Счет VM №356...</div>
<div class="t " style="top:462.11px;font-size:9.2px;left:378.00px;transform-origin:0 0;transform:scaleX(0.845);color:#404040;">Реализация (ак...</div>
<div class="t " style="top:462.11px;font-size:9.2px;left:454.00px;transform-origin:0 0;transform:scaleX(0.845);color:#404040;">02.01.2026 11:45:03</div>
<div class="t " style="top:462.11px;font-size:9.2px;left:555.70px;transform-origin:0 0;transform:scaleX(0.845);color:#404040;">Оплата VM 71198 от...</div>
<div class="t " style="top:462.11px;font-size:9.2px;left:648.60px;transform-origin:0 0;transform:scaleX(0.845);color:#404040;">Операция по пл...</div>
<div class="t " style="top:462.11px;font-size:9.2px;right:233.80px;transform-origin:100% 0;transform:scaleX(0.845);color:#404040;">2 000,00</div>
<div class="t " style="top:462.11px;font-size:9.2px;right:157.20px;transform-origin:100% 0;transform:scaleX(0.845);color:#404040;">2 000,00</div>
<div class="t " style="top:462.11px;font-size:9.2px;right:81.00px;transform-origin:100% 0;transform:scaleX(0.845);color:#404040;">2 000,00</div>
<div class="t " style="top:462.11px;font-size:9.2px;right:4.40px;transform-origin:100% 0;transform:scaleX(0.845);color:#404040;">2 000,00</div>
<div class="r " style="left:5.90px;top:474.76px;width:1016.30px;height:17.66px;background:#ccffcc;"></div>
<div class="t " style="top:479.77px;font-size:9.2px;left:10.50px;transform-origin:0 0;transform:scaleX(0.845);color:#404040;">Ку</div>
<div class="t " style="top:479.77px;font-size:9.2px;left:95.60px;transform-origin:0 0;transform:scaleX(0.845);color:#404040;">02.01.2026 11:55:28</div>
<div class="t " style="top:479.77px;font-size:9.2px;left:197.80px;transform-origin:0 0;transform:scaleX(0.823);color:#404040;">Реализация</div>
<div class="t " style="top:479.77px;font-size:9.2px;left:255.20px;transform-origin:0 0;transform:scaleX(0.877);color:#404040;">Счет VM №356...</div>
<div class="t " style="top:479.77px;font-size:9.2px;left:378.00px;transform-origin:0 0;transform:scaleX(0.845);color:#404040;">Реализация (ак...</div>
<div class="t " style="top:479.77px;font-size:9.2px;left:454.00px;transform-origin:0 0;transform:scaleX(0.845);color:#404040;"></div>
<div class="t " style="top:479.77px;font-size:9.2px;left:555.70px;transform-origin:0 0;transform:scaleX(0.845);color:#404040;"></div>
<div class="t " style="top:479.77px;font-size:9.2px;left:648.60px;transform-origin:0 0;transform:scaleX(0.845);color:#404040;"></div>
<div class="t " style="top:479.77px;font-size:9.2px;right:233.80px;transform-origin:100% 0;transform:scaleX(0.845);color:#404040;">3 600,00</div>
<div class="t " style="top:479.77px;font-size:9.2px;right:157.20px;transform-origin:100% 0;transform:scaleX(0.845);color:#404040;">3 600,00</div>
<div class="r " style="left:5.90px;top:492.42px;width:1016.30px;height:17.66px;background:#ccffcc;"></div>
<div class="t " style="top:497.43px;font-size:9.2px;left:10.50px;transform-origin:0 0;transform:scaleX(0.845);color:#404040;">Непокоренных Ал...</div>
<div class="t " style="top:497.43px;font-size:9.2px;left:95.60px;transform-origin:0 0;transform:scaleX(0.845);color:#404040;">02.01.2026 12:28:25</div>
<div class="t " style="top:497.43px;font-size:9.2px;left:197.80px;transform-origin:0 0;transform:scaleX(0.823);color:#404040;">Реализация</div>
<div class="t " style="top:497.43px;font-size:9.2px;left:255.20px;transform-origin:0 0;transform:scaleX(0.877);color:#404040;">Счет VM №356...</div>
<svg class="r" style="left:333px;top:494.42px" width="10" height="9" viewBox="0 0 10 9"><path d="M1.2 4.6 L3.6 7.2 L8.6 1.2" fill="none" stroke="#1a9a48" stroke-width="1.6"/></svg>
<div class="t " style="top:497.43px;font-size:9.2px;left:378.00px;transform-origin:0 0;transform:scaleX(0.845);color:#404040;">Реализация (ак...</div>
<div class="t " style="top:497.43px;font-size:9.2px;left:454.00px;transform-origin:0 0;transform:scaleX(0.845);color:#404040;">02.01.2026 12:28:25</div>
<div class="t " style="top:497.43px;font-size:9.2px;left:555.70px;transform-origin:0 0;transform:scaleX(0.845);color:#404040;">Оплата VM 71200 от...</div>
<div class="t " style="top:497.43px;font-size:9.2px;left:648.60px;transform-origin:0 0;transform:scaleX(0.845);color:#404040;">Операция по пл...</div>
<div class="t " style="top:497.43px;font-size:9.2px;right:233.80px;transform-origin:100% 0;transform:scaleX(0.845);color:#404040;">850,00</div>
<div class="t " style="top:497.43px;font-size:9.2px;right:157.20px;transform-origin:100% 0;transform:scaleX(0.845);color:#404040;">850,00</div>
<div class="t " style="top:497.43px;font-size:9.2px;right:81.00px;transform-origin:100% 0;transform:scaleX(0.845);color:#404040;">850,00</div>
<div class="t " style="top:497.43px;font-size:9.2px;right:4.40px;transform-origin:100% 0;transform:scaleX(0.845);color:#404040;">850,00</div>
<div class="r " style="left:5.90px;top:510.08px;width:1016.30px;height:17.66px;background:#ccffcc;"></div>
<div class="t " style="top:515.09px;font-size:9.2px;left:10.50px;transform-origin:0 0;transform:scaleX(0.845);color:#404040;">Непокоренных Кл...</div>
<div class="t " style="top:515.09px;font-size:9.2px;left:95.60px;transform-origin:0 0;transform:scaleX(0.845);color:#404040;">02.01.2026 12:38:38</div>
<div class="t " style="top:515.09px;font-size:9.2px;left:197.80px;transform-origin:0 0;transform:scaleX(0.823);color:#404040;">Реализация</div>
<div class="t " style="top:515.09px;font-size:9.2px;left:255.20px;transform-origin:0 0;transform:scaleX(0.877);color:#404040;">Счет VM №356...</div>
<svg class="r" style="left:333px;top:512.08px" width="10" height="9" viewBox="0 0 10 9"><path d="M1.2 4.6 L3.6 7.2 L8.6 1.2" fill="none" stroke="#1a9a48" stroke-width="1.6"/></svg>
<div class="t " style="top:515.09px;font-size:9.2px;left:378.00px;transform-origin:0 0;transform:scaleX(0.845);color:#404040;">Реализация (ак...</div>
<div class="t " style="top:515.09px;font-size:9.2px;left:454.00px;transform-origin:0 0;transform:scaleX(0.845);color:#404040;">02.01.2026 12:38:38</div>
<div class="t " style="top:515.09px;font-size:9.2px;left:555.70px;transform-origin:0 0;transform:scaleX(0.845);color:#404040;">Оплата VM 71202 от...</div>
<div class="t " style="top:515.09px;font-size:9.2px;left:648.60px;transform-origin:0 0;transform:scaleX(0.845);color:#404040;">Операция по пл...</div>
<div class="t " style="top:515.09px;font-size:9.2px;right:233.80px;transform-origin:100% 0;transform:scaleX(0.845);color:#404040;">900,00</div>
<div class="t " style="top:515.09px;font-size:9.2px;right:157.20px;transform-origin:100% 0;transform:scaleX(0.845);color:#404040;">900,00</div>
<div class="t " style="top:515.09px;font-size:9.2px;right:81.00px;transform-origin:100% 0;transform:scaleX(0.845);color:#404040;">900,00</div>
<div class="t " style="top:515.09px;font-size:9.2px;right:4.40px;transform-origin:100% 0;transform:scaleX(0.845);color:#404040;">900,00</div>
<div class="r " style="left:5.90px;top:297.66px;width:1016.30px;height:1.00px;background:#d8f3d8;"></div>
<div class="r " style="left:5.90px;top:315.32px;width:1016.30px;height:1.00px;background:#d8f3d8;"></div>
<div class="r " style="left:5.90px;top:332.98px;width:1016.30px;height:1.00px;background:#d8f3d8;"></div>
<div class="r " style="left:5.90px;top:350.64px;width:1016.30px;height:1.00px;background:#d8f3d8;"></div>
<div class="r " style="left:5.90px;top:368.30px;width:1016.30px;height:1.00px;background:#d8f3d8;"></div>
<div class="r " style="left:5.90px;top:385.96px;width:1016.30px;height:1.00px;background:#d8f3d8;"></div>
<div class="r " style="left:5.90px;top:403.62px;width:1016.30px;height:1.00px;background:#d8f3d8;"></div>
<div class="r " style="left:5.90px;top:421.28px;width:1016.30px;height:1.00px;background:#d8f3d8;"></div>
<div class="r " style="left:5.90px;top:438.94px;width:1016.30px;height:1.00px;background:#d8f3d8;"></div>
<div class="r " style="left:5.90px;top:456.60px;width:1016.30px;height:1.00px;background:#d8f3d8;"></div>
<div class="r " style="left:5.90px;top:474.26px;width:1016.30px;height:1.00px;background:#d8f3d8;"></div>
<div class="r " style="left:5.90px;top:491.92px;width:1016.30px;height:1.00px;background:#d8f3d8;"></div>
<div class="r " style="left:5.90px;top:509.58px;width:1016.30px;height:1.00px;background:#d8f3d8;"></div>
<div class="r " style="left:5.90px;top:527.24px;width:1016.30px;height:1.00px;background:#d8f3d8;"></div>
<div class="r " style="left:19.00px;top:280.70px;width:70.70px;height:213.30px;background:#fff;"></div>
</body></html>
